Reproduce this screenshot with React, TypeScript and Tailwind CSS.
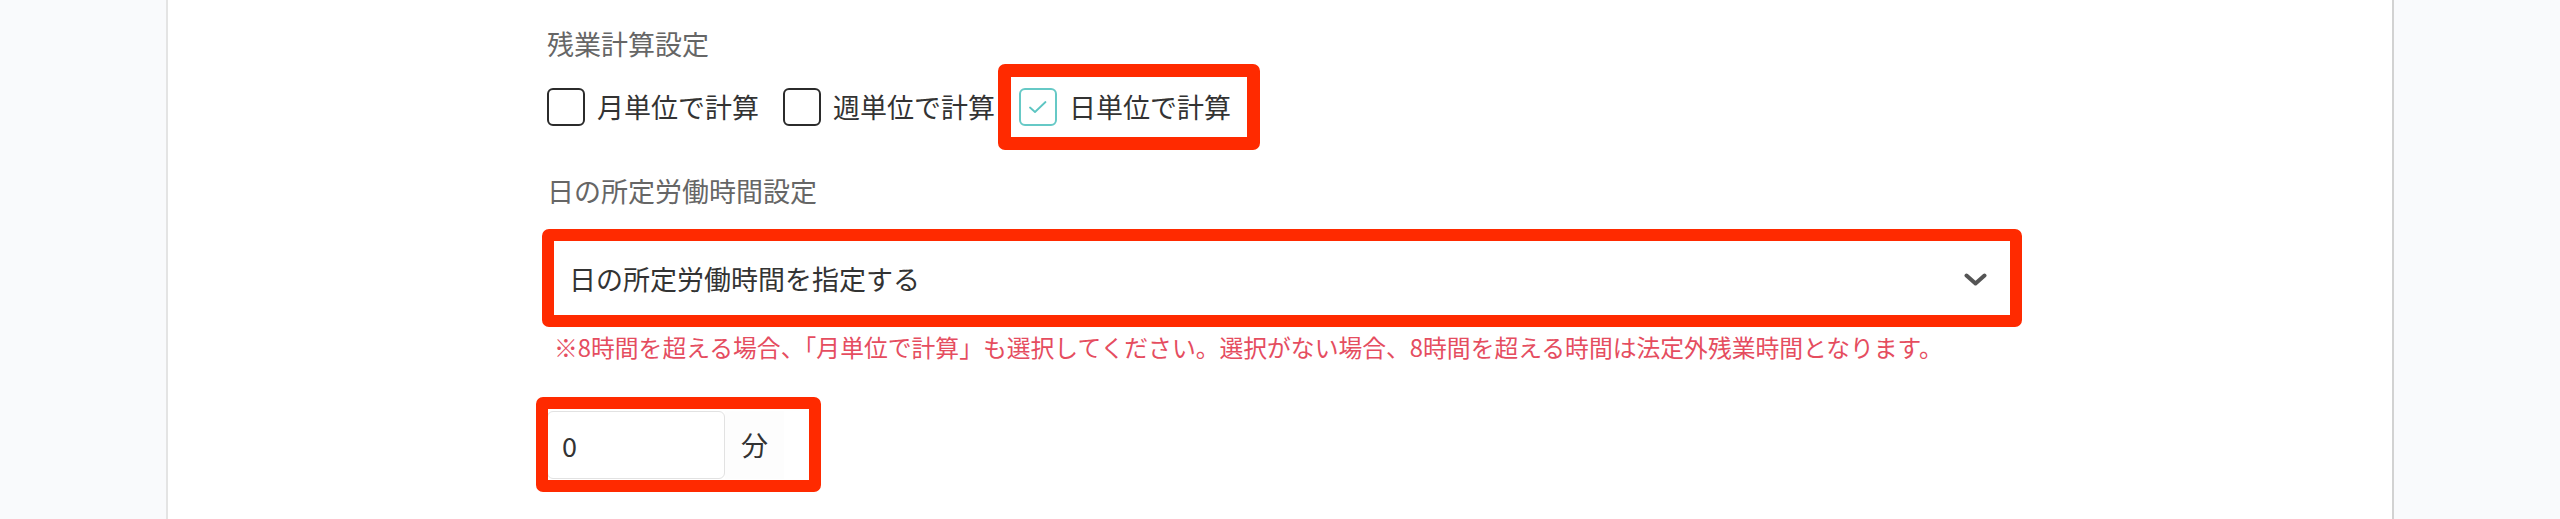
import React from "react";

function Box({ checked }: { checked?: boolean }) {
  if (checked) {
    return (
      <span className="flex h-[38px] w-[38px] shrink-0 items-center justify-center rounded-[6px] border-2 border-[#66c9c6] bg-white">
        <svg width="38" height="38" viewBox="0 0 38 38" className="-m-[2px]">
          <polyline points="11,19.5 16,24 26.5,14" fill="none" stroke="#5cc5c2" strokeWidth="1.8" strokeLinecap="round" strokeLinejoin="round" />
        </svg>
      </span>
    );
  }
  return <span className="block h-[38px] w-[38px] shrink-0 rounded-[6px] border-[2.5px] border-[#2b2b2b] bg-white" />;
}

export default function App() {
  return (
    <div className="flex h-[519px] w-full justify-center bg-[#f9fafc] font-['Noto_Sans_CJK_JP','Noto_Sans',sans-serif]">
      <div className="h-[519px] w-[2228px] border-l-2 border-r-2 border-l-[#e4e4e4] border-r-[#d2d2d2] bg-white">
        <div className="w-[1848px] pl-[379px] pt-[24px]">
          <div className="text-[27px] leading-[40px] text-[#666666]">残業計算設定</div>

          <div className="mt-[24px] flex h-[38px] items-center gap-[24px] text-[27px] leading-[38px] text-[#333333]">
            <label className="flex items-center gap-[12px]">
              <Box />
              <span>月単位で計算</span>
            </label>
            <label className="flex items-center gap-[12px]">
              <Box />
              <span>週単位で計算</span>
            </label>
            <label className="relative flex items-center gap-[12px]">
              <Box checked />
              <span>日単位で計算</span>
              <span className="pointer-events-none absolute -bottom-[24px] -left-[21px] -right-[29px] -top-[24px] rounded-[7px] border-[13px] border-[#ff2a00]" />
            </label>
          </div>

          <div className="mt-[45px] text-[27px] leading-[40px] text-[#666666]">日の所定労働時間設定</div>

          <div className="relative mt-[29px] flex h-[78px] w-[1469px] items-center justify-between rounded-[6px] border border-[#dddddd] bg-white pl-[21px] pr-[28px]">
            <span className="text-[27px] leading-[40px] text-[#333333]">日の所定労働時間を指定する</span>
            <svg width="23" height="13" viewBox="0 0 23 13">
              <polyline points="2.5,2.5 11.5,10.5 20.5,2.5" fill="none" stroke="#555555" strokeWidth="4" strokeLinecap="round" strokeLinejoin="round" />
            </svg>
            <span className="pointer-events-none absolute -bottom-[10px] -left-[6px] -right-[7px] -top-[12px] rounded-[7px] border-[12px] border-[#ff2a00]" />
          </div>

          <p className="mt-[13px] pl-[7px] text-[23.8px] leading-[32px] text-[#e54d5f]">
            ※8時間を超える場合、「月単位で計算」も選択してください。選択がない場合、8時間を超える時間は法定外残業時間となります。
          </p>

          <div className="relative mt-[48px] flex h-[68px] w-[237px]">
            <input
              readOnly
              value="0"
              className="h-[68px] w-[178px] rounded-[6px] border border-[#e2e2e2] bg-white px-[14px] text-[27px] text-[#333333] outline-none"
            />
            <span className="flex h-[68px] items-center bg-[#fdfdfd] px-[16px] text-[27px] text-[#333333]">分</span>
            <span className="pointer-events-none absolute -bottom-[13px] -left-[11px] -right-[37px] -top-[14px] rounded-[7px] border-[12px] border-[#ff2a00]" />
          </div>
        </div>
      </div>
    </div>
  );
}
